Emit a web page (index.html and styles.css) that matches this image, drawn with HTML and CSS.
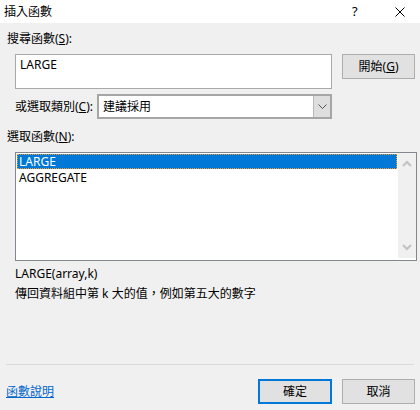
FILE: index.html
```html
<!DOCTYPE html>
<html lang="zh-Hant">
<head>
<meta charset="utf-8">
<link rel="stylesheet" href="styles.css">
</head>
<body>
<div class="window">
  <div class="titlebar">
    <span class="title">插入函數</span>
    <span class="tb-help">?</span>
    <span class="tb-close">
      <svg width="10" height="10" viewBox="0 0 10 10"><path d="M0.5 0.5 L9.5 9.5 M9.5 0.5 L0.5 9.5" stroke="#000" stroke-width="1" fill="none"/></svg>
    </span>
  </div>
  <div class="dialog">
    <div class="search-label">搜尋函數(<u>S</u>):</div>
    <div class="search-row">
      <div class="textbox">LARGE</div>
      <div class="btn go">開始(<u>G</u>)</div>
    </div>
    <div class="cat-row">
      <span class="cat-label">或選取類別(<u>C</u>):</span>
      <div class="select">
        <span class="select-value">建議採用</span>
        <span class="select-btn">
          <svg width="9" height="5" viewBox="0 0 9 5"><path d="M0.5 0.5 L4.5 4.5 L8.5 0.5" stroke="#555" stroke-width="1" fill="none"/></svg>
        </span>
      </div>
    </div>
    <div class="list-label">選取函數(<u>N</u>):</div>
    <div class="listbox">
      <div class="items">
        <div class="item selected">LARGE</div>
        <div class="item">AGGREGATE</div>
      </div>
      <div class="scrollbar">
        <svg width="10" height="7" viewBox="0 0 10 7"><path d="M1 6 L5 2 L9 6" stroke="#c2c2c2" stroke-width="2" fill="none"/></svg>
        <svg width="10" height="7" viewBox="0 0 10 7"><path d="M1 1 L5 5 L9 1" stroke="#c2c2c2" stroke-width="2" fill="none"/></svg>
      </div>
    </div>
    <div class="syntax">LARGE(array,k)</div>
    <div class="desc">傳回資料組中第 k 大的值<span class="cjk-punct" lang="zh-TW">，</span>例如第五大的數字</div>
    <div class="separator"></div>
    <div class="footer">
      <a class="help-link" href="#">函數說明</a>
      <div class="buttons">
        <div class="btn ok">確定</div>
        <div class="btn cancel">取消</div>
      </div>
    </div>
  </div>
</div>
</body>
</html>
```
FILE: styles.css
```css
html, body {
  margin: 0;
  padding: 0;
}
body {
  width: 420px;
  height: 410px;
  background: #f0f0f0;
  font-family: "Noto Sans", "Noto Sans CJK TC", sans-serif;
  font-size: 12px;
  color: #000;
  overflow: hidden;
}
u {
  text-decoration: underline;
  text-underline-offset: 1px;
}
.window {
  width: 420px;
  height: 410px;
  display: flex;
  flex-direction: column;
}
.titlebar {
  height: 23px;
  background: #fff;
  display: flex;
  align-items: center;
  padding-left: 4px;
}
.title {
  flex: 1;
  line-height: 23px;
}
.tb-help {
  width: 10px;
  margin-right: 33px;
  font-size: 13px;
  line-height: 23px;
}
.tb-close {
  display: flex;
  margin-right: 15px;
  margin-top: 1px;
}
.dialog {
  flex: 1;
  display: flex;
  flex-direction: column;
}
.search-label {
  height: 31px;
  line-height: 32px;
  padding-left: 7px;
}
.search-row {
  display: flex;
  align-items: flex-start;
  gap: 10px;
  padding-left: 15px;
  height: 35px;
}
.textbox {
  box-sizing: border-box;
  width: 317px;
  height: 35px;
  background: #fff;
  border: 1px solid #a9a9a9;
  padding: 3px 4px;
  line-height: 14px;
}
.btn {
  box-sizing: border-box;
  height: 25px;
  width: 73px;
  background: #e1e1e1;
  border: 1px solid #adadad;
  display: flex;
  align-items: center;
  justify-content: center;
  line-height: 14px;
}
.cat-row {
  margin-top: 5px;
  height: 25px;
  display: flex;
  align-items: center;
  padding-left: 15px;
}
.cat-label {
  width: 82px;
  line-height: 25px;
}
.select {
  box-sizing: border-box;
  width: 235px;
  height: 25px;
  background: #fff;
  border: 2px solid #a6a6a6;
  display: flex;
}
.select-value {
  flex: 1;
  line-height: 21px;
  padding-left: 4px;
}
.select-btn {
  width: 16px;
  background: #dedede;
  border-left: 1px solid #b9b9b9;
  display: flex;
  align-items: center;
  justify-content: center;
}
.list-label {
  height: 33px;
  box-sizing: border-box;
  padding-top: 11px;
  line-height: 14px;
  padding-left: 7px;
}
.listbox {
  box-sizing: border-box;
  margin-left: 15px;
  width: 402px;
  height: 109px;
  background: #fff;
  border: 1px solid #828790;
  display: flex;
}
.items {
  flex: 1;
  padding: 1px 1px 0 1px;
}
.item {
  height: 15px;
  line-height: 13px;
  padding-top: 1px;
  margin-top: 1px;
  box-sizing: border-box;
  padding-left: 2px;
}
.item.selected {
  margin-top: 0;
  background: #0078d7;
  color: #fff;
  outline: 1px dotted #f39c2b;
  outline-offset: -1px;
}
.scrollbar {
  width: 18px;
  background: #f0f0f0;
  display: flex;
  flex-direction: column;
  justify-content: space-between;
  align-items: center;
  padding: 7px 0 7px;
  margin-bottom: 2px;
}
.syntax {
  margin-top: 3px;
  padding-left: 15px;
  line-height: 19px;
}
.desc {
  padding-left: 15px;
  line-height: 19px;
}
.cjk-punct {
  font-family: "Noto Sans CJK TC", sans-serif;
}
.separator {
  margin: 61px 6px 0 6px;
  height: 1px;
  background: #dadada;
}
.footer {
  margin-top: 14px;
  display: flex;
  align-items: center;
  justify-content: space-between;
  padding-left: 6px;
  padding-right: 5px;
  height: 25px;
}
.help-link {
  color: #0066cc;
  text-decoration: underline;
  line-height: 14px;
}
.buttons {
  display: flex;
  gap: 10px;
}
.btn.ok {
  width: 74px;
  border: 2px solid #0078d7;
}
```
